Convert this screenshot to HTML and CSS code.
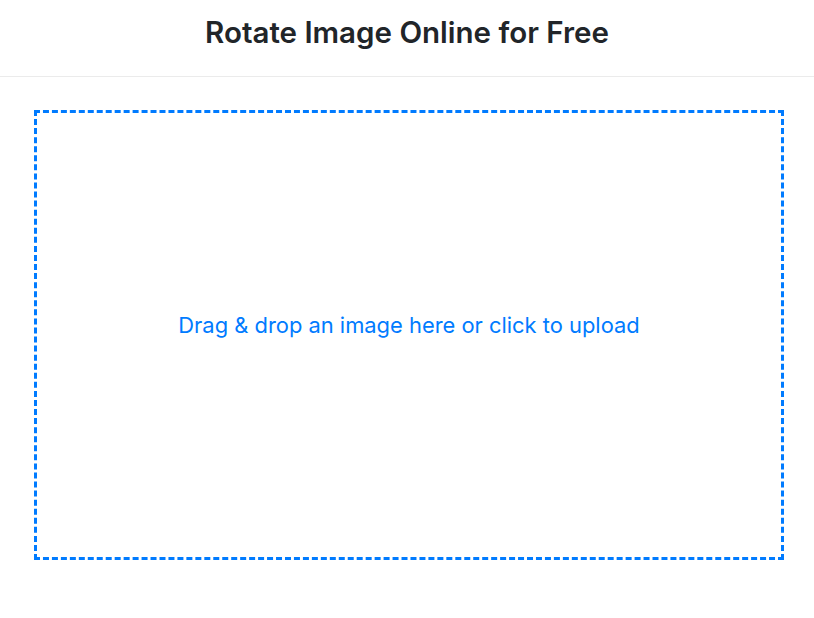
FILE: index.html
```html
<!DOCTYPE html>
<html lang="en">
<head>
<meta charset="utf-8">
<title>Rotate Image Online for Free</title>
<link rel="stylesheet" href="styles.css">
</head>
<body>
  <header class="site-header">
    <h1 class="site-title">Rotate Image Online for Free</h1>
  </header>
  <main class="page">
    <label class="dropzone">
      <input class="dropzone-input" type="file" accept="image/*">
      <span class="dropzone-text">Drag &amp; drop an image here or click to upload</span>
    </label>
  </main>
</body>
</html>
```
FILE: styles.css
```css
* {
  box-sizing: border-box;
}

body {
  margin: 0;
  background: #ffffff;
  font-family: "Inter", "Noto Sans", "Liberation Sans", sans-serif;
  color: #212529;
}

.site-header {
  height: 77px;
  padding-bottom: 10px;
  border-bottom: 1px solid #ebebeb;
  display: flex;
  align-items: center;
  justify-content: center;
}

.site-title {
  margin: 0;
  font-size: 29.5px;
  font-weight: 600;
  line-height: 1.2;
  color: #212529;
}

.page {
  padding: 33px 30px 0 34px;
}

.dropzone {
  display: flex;
  align-items: center;
  justify-content: center;
  height: 450px;
  padding-bottom: 20px;
  border: 3px dashed #007bff;
  cursor: pointer;
}

.dropzone-input {
  display: none;
}

.dropzone-text {
  font-size: 21.9px;
  color: #007bff;
}
```
